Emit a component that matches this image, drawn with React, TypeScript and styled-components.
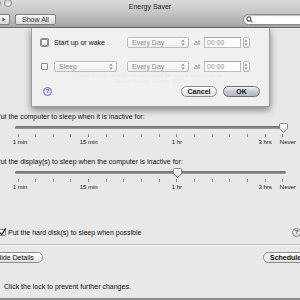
import React from "react";
import styled, { createGlobalStyle } from "styled-components";

const FONT = `"Liberation Sans", Arial, sans-serif`;

const GlobalStyle = createGlobalStyle`
  html, body { margin: 0; padding: 0; background: #e8e8e8; }
  body { font-family: ${FONT}; }
  #root { width: 300px; height: 300px; overflow: hidden; }
`;

const Viewport = styled.div`
  width: 300px;
  height: 300px;
  overflow: hidden;
`;

const Window = styled.div`
  width: 340px;
  height: 300px;
  margin-left: -20px;
  box-sizing: border-box;
  display: flex;
  flex-direction: column;
  background: #e8e8e8;
  border-bottom: 2px solid #8a8a8a;
  font-family: ${FONT};
  color: #111;
`;

/* ---------- title bar + toolbar ---------- */

const Chrome = styled.div`
  flex: none;
  height: 28px;
  box-sizing: border-box;
  display: flex;
  flex-direction: column;
  background: linear-gradient(#dadada, #c6c6c6 45%, #a7a7a7);
  border-bottom: 1px solid #6e6e6e;
`;

const TitleRow = styled.div`
  height: 12px;
  display: grid;
  grid-template-columns: 1fr auto 1fr;
  align-items: center;
`;

const Lights = styled.div`
  display: flex;
  gap: 3px;
  padding-left: 2px;
  align-self: start;
  margin-top: -1px;
`;

const Light = styled.span`
  width: 8px;
  height: 8px;
  box-sizing: border-box;
  border-radius: 50%;
  border: 1px solid #8c8c8c;
  background: linear-gradient(#d2d2d2, #efefef);
`;

const Title = styled.div`
  font-size: 7px;
  line-height: 13px;
  color: #222;
  white-space: nowrap;
`;

const Toolbar = styled.div`
  flex: 1;
  display: flex;
  align-items: center;
  padding: 0 10px 0 5px;
`;

const Segment = styled.div`
  display: flex;
  height: 11px;
  box-sizing: border-box;
  border: 1px solid #808080;
  border-radius: 2px;
  background: linear-gradient(#f6f6f6, #d6d6d6);
  overflow: hidden;
`;

const SegmentCell = styled.div<{ $divider?: boolean }>`
  width: 11px;
  display: flex;
  align-items: center;
  justify-content: center;
  border-left: ${(p) => (p.$divider ? "1px solid #9a9a9a" : "none")};
`;

const ToolButton = styled.div`
  margin-left: 5px;
  width: 41px;
  height: 11px;
  box-sizing: border-box;
  border: 1px solid #808080;
  border-radius: 2px;
  background: linear-gradient(#f6f6f6, #d8d8d8);
  font-size: 7px;
  line-height: 9px;
  text-align: center;
  color: #333;
`;

const Spacer = styled.div`
  flex: 1;
`;

const Search = styled.div`
  width: 67px;
  height: 11px;
  box-sizing: border-box;
  border: 1px solid #8a8a8a;
  border-radius: 6px;
  background: #fff;
  box-shadow: inset 0 1px 1px rgba(0, 0, 0, 0.25);
  display: flex;
  align-items: center;
  padding-left: 2px;
`;

/* ---------- content ---------- */

const Content = styled.div`
  position: relative;
  flex: 1;
  display: flex;
  flex-direction: column;
`;

const Behind = styled.div`
  height: 84px;
  display: flex;
  flex-direction: column;
  align-items: center;
  padding-top: 44px;
  box-sizing: border-box;
`;

const GhostLine = styled.div`
  font-size: 5.5px;
  line-height: 6px;
  color: #444;
  white-space: nowrap;
`;

const Sheet = styled.div`
  position: absolute;
  top: 0;
  left: 51px;
  width: 239px;
  height: 79px;
  box-sizing: border-box;
  padding-top: 9px;
  display: flex;
  flex-direction: column;
  background: rgba(240, 240, 240, 0.94);
  border: 1px solid rgba(70, 70, 70, 0.5);
  border-top: none;
  box-shadow: 0 3px 7px rgba(0, 0, 0, 0.45);
`;

const SheetRow = styled.div<{ $top?: number }>`
  height: 11px;
  margin-top: ${(p) => p.$top ?? 0}px;
  display: flex;
  align-items: center;
  padding-left: 9px;
`;

const Check = styled.span<{ $focus?: boolean }>`
  flex: none;
  width: 7px;
  height: 7px;
  box-sizing: border-box;
  border: 1px solid #8a8a8a;
  border-radius: 1px;
  background: linear-gradient(#ffffff, #e6e6e6);
  box-shadow: ${(p) => (p.$focus ? "0 0 0 1px rgba(92, 110, 150, 0.75)" : "none")};
  display: flex;
  align-items: center;
  justify-content: center;
`;

const LabelCell = styled.div`
  width: 73px;
  margin-left: 6px;
  display: flex;
  align-items: center;
`;

const RowText = styled.span`
  font-size: 7px;
  line-height: 9px;
  color: #111;
  white-space: nowrap;
`;

const Popup = styled.div<{ $w: number }>`
  width: ${(p) => p.$w}px;
  height: 11px;
  box-sizing: border-box;
  border: 1px solid #bdbdbd;
  border-radius: 2px;
  background: linear-gradient(#fdfdfd, #ebebeb);
  display: flex;
  align-items: center;
  justify-content: space-between;
  padding: 0 3px 0 4px;
  font-size: 7px;
  color: #8c8c8c;
  white-space: nowrap;
`;

const At = styled.span`
  margin-left: 5px;
  font-size: 7px;
  color: #8c8c8c;
`;

const TimeField = styled.div`
  margin-left: 4px;
  width: 37px;
  height: 11px;
  box-sizing: border-box;
  background: #fff;
  border: 1px solid #bcbcbc;
  border-top-color: #a4a4a4;
  padding-left: 2px;
  font-size: 7px;
  line-height: 9px;
  color: #8a8a8a;
`;

const Stepper = styled.div`
  margin-left: 2px;
  width: 7px;
  height: 11px;
  box-sizing: border-box;
  border: 1px solid #bcbcbc;
  border-radius: 2px;
  background: linear-gradient(#fdfdfd, #ececec);
  display: flex;
  align-items: center;
  justify-content: center;
`;

const SheetFoot = styled.div`
  margin-top: 14px;
  height: 11px;
  display: flex;
  align-items: center;
  padding: 0 9px 0 11px;
`;

const HelpPurple = styled.span`
  width: 9px;
  height: 9px;
  box-sizing: border-box;
  border-radius: 50%;
  border: 1px solid #7c64b8;
  background: #e2dbf3;
  color: #6a4fae;
  font-size: 6px;
  font-weight: bold;
  line-height: 7px;
  text-align: center;
`;

const Pill = styled.div<{ $w: number; $default?: boolean; $bold?: boolean }>`
  width: ${(p) => p.$w}px;
  height: 11px;
  box-sizing: border-box;
  border-radius: 6px;
  border: 1px solid ${(p) => (p.$default ? "#6f6f6f" : "#8a8a8a")};
  background: ${(p) =>
    p.$default
      ? "linear-gradient(#eef0f3, #c4c8cf 55%, #b2b7bf)"
      : "linear-gradient(#ffffff, #e2e2e2)"};
  font-size: 7px;
  line-height: 9px;
  font-weight: ${(p) => (p.$bold ? "bold" : "normal")};
  color: #111;
  text-align: center;
  white-space: nowrap;
`;

const FootButtons = styled.div`
  display: flex;
  gap: 6px;
`;

/* ---------- sliders ---------- */

const SliderSection = styled.section<{ $top: number }>`
  margin-top: ${(p) => p.$top}px;
  display: flex;
  flex-direction: column;
`;

const SliderLabel = styled.div`
  padding-left: 16px;
  font-size: 7px;
  line-height: 9px;
  white-space: nowrap;
`;

const SliderBody = styled.div`
  margin: 2px 0 0 35px;
  width: 271px;
`;

const TrackLane = styled.div`
  position: relative;
  height: 10px;
`;

const TrackLine = styled.div`
  position: relative;
  top: 3px;
  height: 3px;
  border-radius: 2px;
  background: linear-gradient(#6c6c6c, #9c9c9c);
`;

const Thumb = styled.svg`
  position: absolute;
  top: 0;
  width: 9px;
  height: 10px;
`;

const TickRow = styled.div`
  margin: 1px 3px 0;
  display: flex;
  justify-content: space-between;
`;

const TickCell = styled.div`
  width: 0;
  display: flex;
  flex-direction: column;
  align-items: center;
`;

const Tick = styled.div`
  flex: none;
  width: 1px;
  height: 3px;
  background: #8e8e8e;
`;

const TickLabel = styled.div<{ $shift: number }>`
  margin-top: 2px;
  font-size: 6px;
  line-height: 7px;
  white-space: nowrap;
  color: #111;
  transform: translateX(${(p) => p.$shift}px);
`;

/* ---------- lower part ---------- */

const DiskRow = styled.div`
  margin-top: 37px;
  height: 9px;
  display: flex;
  align-items: center;
  padding: 0 19px;
`;

const DiskText = styled.span`
  margin-left: 2px;
  font-size: 7px;
  line-height: 9px;
  white-space: nowrap;
`;

const HelpRound = styled.span`
  width: 9px;
  height: 9px;
  box-sizing: border-box;
  border-radius: 50%;
  border: 1px solid #7a7a7a;
  background: linear-gradient(#ffffff, #e0e0e0);
  font-size: 6px;
  font-weight: bold;
  line-height: 7px;
  text-align: center;
  color: #333;
`;

const Separator = styled.div`
  margin-top: 7px;
  height: 1px;
  background: #c2c2c2;
  border-bottom: 1px solid #f6f6f6;
`;

const ButtonRow = styled.div`
  margin-top: 6px;
  display: flex;
  justify-content: space-between;
  padding: 0 6px 0 7px;
`;

const LockRow = styled.div`
  margin-top: 19px;
  height: 9px;
  display: flex;
  align-items: center;
  padding-left: 10px;
  gap: 5px;
`;

const LockText = styled.span`
  font-size: 7px;
  line-height: 9px;
  white-space: nowrap;
  color: #111;
`;

/* ---------- small drawings ---------- */

const UpDown = ({ color = "#8c8c8c" }: { color?: string }) => (
  <svg width="4" height="7" viewBox="0 0 4 7">
    <path d="M2 0.5 L3.7 2.6 H0.3 Z M2 6.5 L3.7 4.4 H0.3 Z" fill={color} />
  </svg>
);

const Magnifier = () => (
  <svg width="7" height="7" viewBox="0 0 7 7">
    <circle cx="2.9" cy="2.9" r="2" fill="none" stroke="#555" strokeWidth="1.1" />
    <path d="M4.4 4.4 L6.4 6.4" stroke="#555" strokeWidth="1.3" />
  </svg>
);

const Arrow = ({ dir }: { dir: "l" | "r" }) => (
  <svg width="4" height="5" viewBox="0 0 4 5">
    <path d={dir === "l" ? "M0.5 2.5 L3.5 0.5 V4.5 Z" : "M3.5 2.5 L0.5 0.5 V4.5 Z"} fill="#555" />
  </svg>
);

const CheckMark = () => (
  <svg width="7" height="7" viewBox="0 0 7 7" style={{ overflow: "visible" }}>
    <path d="M1 3.6 L2.8 5.6 L6.6 -0.6" fill="none" stroke="#222" strokeWidth="1.2" />
  </svg>
);

const LockIcon = () => (
  <svg width="9" height="11" viewBox="0 0 9 11">
    <path d="M2 5 V3.3 A2.5 2.5 0 0 1 7 3.3 V5" fill="none" stroke="#8a8a8a" strokeWidth="1.2" />
    <rect x="0.5" y="5" width="8" height="5.5" rx="1" fill="#c9a54a" stroke="#8a6d22" strokeWidth="0.6" />
  </svg>
);

const ThumbShape = ({ left }: { left: string }) => (
  <Thumb viewBox="0 0 9 10" style={{ left }}>
    <defs>
      <linearGradient id="thumbFill" x1="0" y1="0" x2="0" y2="1">
        <stop offset="0" stopColor="#ffffff" />
        <stop offset="1" stopColor="#d9d9d9" />
      </linearGradient>
    </defs>
    <path
      d="M1.7 0.5 H7.3 Q8.5 0.5 8.5 1.7 V5.8 L4.5 9.4 L0.5 5.8 V1.7 Q0.5 0.5 1.7 0.5 Z"
      fill="url(#thumbFill)"
      stroke="#7d7d7d"
      strokeWidth="0.9"
    />
  </Thumb>
);

/* ---------- data ---------- */

const TICK_COUNT = 16;
const TICK_SPAN = 265;
const tickLabels: Record<number, { text: string; shift: number }> = {
  0: { text: "1 min", shift: 2 },
  4: { text: "15 min", shift: 0 },
  9: { text: "1 hr", shift: 0 },
  14: { text: "3 hrs", shift: 0 },
  15: { text: "Never", shift: 5 },
};

function SleepSlider({ label, value, top }: { label: string; value: number; top: number }) {
  const center = 3 + (TICK_SPAN * value) / (TICK_COUNT - 1);
  return (
    <SliderSection $top={top}>
      <SliderLabel>{label}</SliderLabel>
      <SliderBody>
        <TrackLane>
          <TrackLine />
          <ThumbShape left={`${center - 4.5}px`} />
        </TrackLane>
        <TickRow>
          {Array.from({ length: TICK_COUNT }, (_, i) => (
            <TickCell key={i}>
              <Tick />
              {tickLabels[i] && <TickLabel $shift={tickLabels[i].shift}>{tickLabels[i].text}</TickLabel>}
            </TickCell>
          ))}
        </TickRow>
      </SliderBody>
    </SliderSection>
  );
}

function ScheduleRow({ top, focus, children }: { top?: number; focus?: boolean; children: React.ReactNode }) {
  return (
    <SheetRow $top={top}>
      <Check $focus={focus} />
      <LabelCell>{children}</LabelCell>
      <Popup $w={62}>
        <span>Every Day</span>
        <UpDown />
      </Popup>
      <At>at</At>
      <TimeField>00:00</TimeField>
      <Stepper>
        <UpDown color="#9a9a9a" />
      </Stepper>
    </SheetRow>
  );
}

export default function App() {
  return (
    <>
      <GlobalStyle />
      <Viewport>
        <Window>
          <Chrome>
            <TitleRow>
              <Lights>
                <Light />
                <Light />
                <Light />
              </Lights>
              <Title>Energy Saver</Title>
              <div />
            </TitleRow>
            <Toolbar>
              <Segment>
                <SegmentCell>
                  <Arrow dir="l" />
                </SegmentCell>
                <SegmentCell $divider>
                  <Arrow dir="r" />
                </SegmentCell>
              </Segment>
              <ToolButton>Show All</ToolButton>
              <Spacer />
              <Search>
                <Magnifier />
              </Search>
            </Toolbar>
          </Chrome>

          <Content>
            <Behind>
              <GhostLine>Your energy settings are optimized for normal performance</GhostLine>
              <GhostLine>Current battery charge: 100%</GhostLine>
            </Behind>

            <SleepSlider top={0} label="Put the computer to sleep when it is inactive for:" value={15} />
            <SleepSlider top={11} label="Put the display(s) to sleep when the computer is inactive for:" value={9} />

            <DiskRow>
              <Check>
                <CheckMark />
              </Check>
              <DiskText>Put the hard disk(s) to sleep when possible</DiskText>
              <Spacer />
              <HelpRound>?</HelpRound>
            </DiskRow>

            <Separator />

            <ButtonRow>
              <Pill $w={56}>Hide Details</Pill>
              <Pill $w={51} $bold>Schedule...</Pill>
            </ButtonRow>

            <LockRow>
              <LockIcon />
              <LockText>Click the lock to prevent further changes.</LockText>
            </LockRow>

            <Sheet>
              <ScheduleRow focus>
                <RowText>Start up or wake</RowText>
              </ScheduleRow>
              <ScheduleRow top={13}>
                <Popup $w={63}>
                  <span>Sleep</span>
                  <UpDown />
                </Popup>
              </ScheduleRow>
              <SheetFoot>
                <HelpPurple>?</HelpPurple>
                <Spacer />
                <FootButtons>
                  <Pill $w={36} $bold>
                    Cancel
                  </Pill>
                  <Pill $w={37} $default $bold>
                    OK
                  </Pill>
                </FootButtons>
              </SheetFoot>
            </Sheet>
          </Content>
        </Window>
      </Viewport>
    </>
  );
}
